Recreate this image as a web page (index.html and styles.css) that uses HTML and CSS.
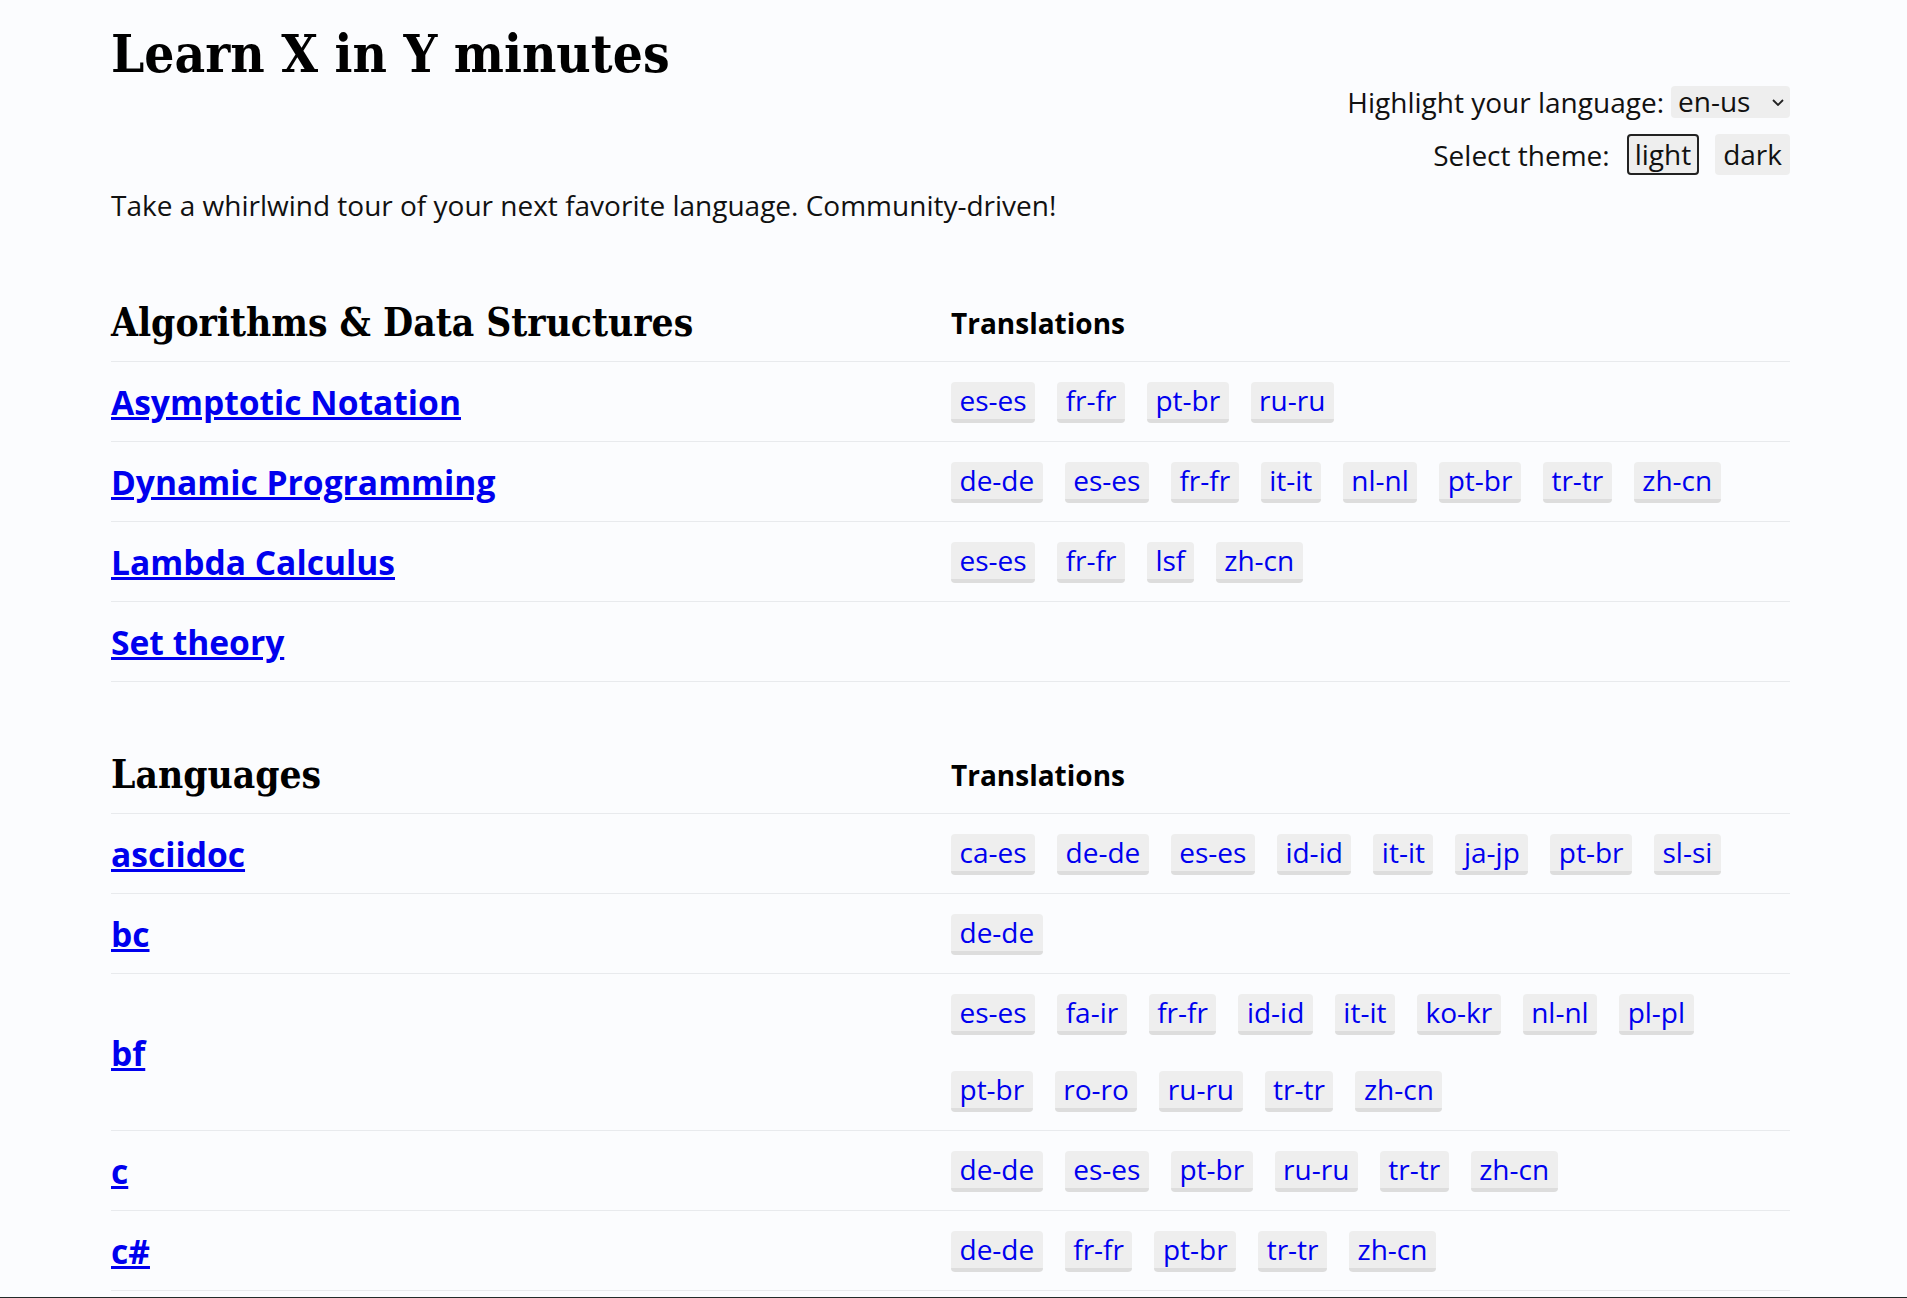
FILE: index.html
```html
<!DOCTYPE html>
<html lang="en">
<head>
<meta charset="utf-8">
<title>Learn X in Y minutes</title>
<link rel="stylesheet" href="styles.css">
</head>
<body>
<div class="page">
  <header class="header">
    <h1 class="site-title">Learn X in Y minutes</h1>
    <div class="controls">
      <div class="control-row">
        <label class="control-label" for="lang">Highlight your language:</label>
        <span class="select-wrap">
          <select id="lang" class="lang-select">
            <option>en-us</option>
          </select>
          <svg class="chevron" width="12" height="7" viewBox="0 0 12 7" aria-hidden="true"><polyline points="1,1 6,6 11,1" fill="none" stroke="#222" stroke-width="1.8"/></svg>
        </span>
      </div>
      <div class="control-row">
        <span class="control-label theme-label">Select theme:</span>
        <button class="theme-btn active">light</button>
        <button class="theme-btn">dark</button>
      </div>
    </div>
  </header>

  <p class="tagline">Take a whirlwind tour of your next favorite language. Community-driven!</p>

  <section class="section first">
    <div class="row head-row">
      <h2 class="section-title">Algorithms &amp; Data Structures</h2>
      <div class="trans-title">Translations</div>
    </div>
    <div class="row">
      <a class="topic" href="#">Asymptotic Notation</a>
      <div class="badges"><a class="badge" href="#">es-es</a><a class="badge" href="#">fr-fr</a><a class="badge" href="#">pt-br</a><a class="badge" href="#">ru-ru</a></div>
    </div>
    <div class="row">
      <a class="topic" href="#">Dynamic Programming</a>
      <div class="badges"><a class="badge" href="#">de-de</a><a class="badge" href="#">es-es</a><a class="badge" href="#">fr-fr</a><a class="badge" href="#">it-it</a><a class="badge" href="#">nl-nl</a><a class="badge" href="#">pt-br</a><a class="badge" href="#">tr-tr</a><a class="badge" href="#">zh-cn</a></div>
    </div>
    <div class="row">
      <a class="topic" href="#">Lambda Calculus</a>
      <div class="badges"><a class="badge" href="#">es-es</a><a class="badge" href="#">fr-fr</a><a class="badge" href="#">lsf</a><a class="badge" href="#">zh-cn</a></div>
    </div>
    <div class="row">
      <a class="topic" href="#">Set theory</a>
      <div class="badges"></div>
    </div>
  </section>

  <section class="section">
    <div class="row head-row">
      <h2 class="section-title">Languages</h2>
      <div class="trans-title">Translations</div>
    </div>
    <div class="row">
      <a class="topic" href="#">asciidoc</a>
      <div class="badges"><a class="badge" href="#">ca-es</a><a class="badge" href="#">de-de</a><a class="badge" href="#">es-es</a><a class="badge" href="#">id-id</a><a class="badge" href="#">it-it</a><a class="badge" href="#">ja-jp</a><a class="badge" href="#">pt-br</a><a class="badge" href="#">sl-si</a></div>
    </div>
    <div class="row">
      <a class="topic" href="#">bc</a>
      <div class="badges"><a class="badge" href="#">de-de</a></div>
    </div>
    <div class="row">
      <a class="topic" href="#">bf</a>
      <div class="badges"><a class="badge" href="#">es-es</a><a class="badge" href="#">fa-ir</a><a class="badge" href="#">fr-fr</a><a class="badge" href="#">id-id</a><a class="badge" href="#">it-it</a><a class="badge" href="#">ko-kr</a><a class="badge" href="#">nl-nl</a><a class="badge" href="#">pl-pl</a><a class="badge" href="#">pt-br</a><a class="badge" href="#">ro-ro</a><a class="badge" href="#">ru-ru</a><a class="badge" href="#">tr-tr</a><a class="badge" href="#">zh-cn</a></div>
    </div>
    <div class="row">
      <a class="topic" href="#">c</a>
      <div class="badges"><a class="badge" href="#">de-de</a><a class="badge" href="#">es-es</a><a class="badge" href="#">pt-br</a><a class="badge" href="#">ru-ru</a><a class="badge" href="#">tr-tr</a><a class="badge" href="#">zh-cn</a></div>
    </div>
    <div class="row">
      <a class="topic" href="#">c#</a>
      <div class="badges"><a class="badge" href="#">de-de</a><a class="badge" href="#">fr-fr</a><a class="badge" href="#">pt-br</a><a class="badge" href="#">tr-tr</a><a class="badge" href="#">zh-cn</a></div>
    </div>
  </section>
</div>
<footer class="footer"></footer>
</body>
</html>
```
FILE: styles.css
```css
html, body {
  margin: 0;
  padding: 0;
}

body {
  background: #fbfcfe;
  color: #111;
  font-family: "Open Sans", "Noto Sans", sans-serif;
  font-size: 28px;
  line-height: 38px;
}

.page {
  width: 1679px;
  padding-left: 111px;
}

/* Header */
.header {
  display: flex;
  justify-content: space-between;
  align-items: flex-start;
  height: 176px;
}

.site-title {
  margin: 23px 0 0;
  font-family: "DejaVu Serif Condensed", "DejaVu Serif", serif;
  font-stretch: condensed;
  font-weight: bold;
  font-size: 52.7px;
  line-height: 62px;
  color: #000;
}

.controls {
  margin-top: 83px;
  display: flex;
  flex-direction: column;
  align-items: flex-end;
  gap: 13px;
}

.control-row {
  display: flex;
  align-items: center;
}

.control-label {
  color: #111;
  margin-right: 7px;
}

.theme-label {
  margin-right: 17px;
}

.select-wrap {
  position: relative;
  display: flex;
  height: 32px;
}

.lang-select {
  -webkit-appearance: none;
  appearance: none;
  box-sizing: border-box;
  width: 119px;
  height: 32px;
  border: none;
  border-radius: 4px;
  background: #eeeeee;
  color: #111;
  font-family: "Open Sans", sans-serif;
  font-size: 28px;
  line-height: 30px;
  padding: 0 0 2px 7px;
  margin: 0;
}

.chevron {
  position: absolute;
  right: 6px;
  top: 13px;
  pointer-events: none;
}

.theme-btn {
  height: 41px;
  padding: 0 6px;
  margin: 0 0 0 16px;
  border: 2px solid transparent;
  border-radius: 4px;
  background: #eeeeee;
  color: #111;
  font-family: "Open Sans", sans-serif;
  font-size: 28px;
  line-height: 37px;
}

.theme-btn:first-of-type {
  margin-left: 0;
}

.theme-btn.active {
  border-color: #222;
}

/* Tagline */
.tagline {
  margin: 10px 0 0;
}

/* Sections */
.section {
  margin-top: 70px;
}

.section.first {
  margin-top: 76px;
}

.row {
  display: grid;
  grid-template-columns: 840px 1fr;
  align-items: center;
  padding: 20px 0 18px;
  border-bottom: 1px solid #e8eaed;
  min-height: 41px;
}

.head-row {
  padding: 0 0 15px;
  min-height: 0;
}

.section-title {
  margin: 0;
  font-family: "DejaVu Serif Condensed", "DejaVu Serif", serif;
  font-stretch: condensed;
  font-weight: bold;
  font-size: 38.6px;
  line-height: 46px;
  color: #000;
}

.trans-title {
  font-weight: bold;
  color: #000;
}

.topic {
  font-weight: bold;
  font-size: 33.6px;
  line-height: 41px;
  color: #0000ee;
  text-decoration: underline;
  justify-self: start;
}

.badges {
  display: flex;
  flex-wrap: wrap;
  column-gap: 22px;
  row-gap: 36px;
}

.badge {
  display: inline-block;
  height: 37px;
  padding: 0 8.5px;
  line-height: 37px;
  background: #eeeeee;
  border-bottom: 4px solid #dddddd;
  border-radius: 4px;
  color: #0000ee;
  text-decoration: none;
}

.footer {
  margin-top: 6px;
  height: 2px;
  background: #232a29;
}
```
